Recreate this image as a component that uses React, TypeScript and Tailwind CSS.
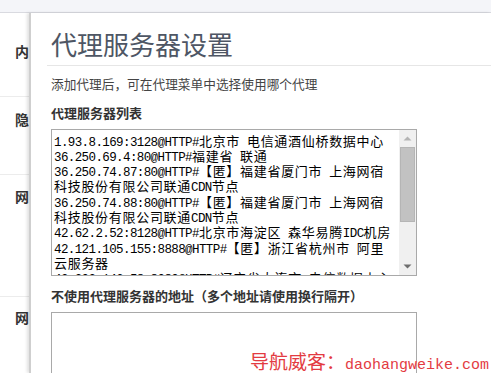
import React from 'react';

const proxyLines = [
  '1.93.8.169:3128@HTTP#北京市 电信通酒仙桥数据中心',
  '36.250.69.4:80@HTTP#福建省 联通',
  '36.250.74.87:80@HTTP#【匿】福建省厦门市 上海网宿',
  '科技股份有限公司联通CDN节点',
  '36.250.74.88:80@HTTP#【匿】福建省厦门市 上海网宿',
  '科技股份有限公司联通CDN节点',
  '42.62.2.52:8128@HTTP#北京市海淀区 森华易腾IDC机房',
  '42.121.105.155:8888@HTTP#【匿】浙江省杭州市 阿里',
  '云服务器',
  '42.202.146.58:8080@HTTP#辽宁省大连市 电信数据中心',
];

// split a line into CJK / ascii runs so the wide glyphs get their own sizing
const splitRuns = (text: string) => {
  const runs: { cjk: boolean; text: string }[] = [];
  const re = /[\u3000-\u9fff\uff00-\uffef]+/g;
  let last = 0;
  let m: RegExpExecArray | null;
  while ((m = re.exec(text)) !== null) {
    if (m.index > last) runs.push({ cjk: false, text: text.slice(last, m.index) });
    runs.push({ cjk: true, text: m[0] });
    last = m.index + m[0].length;
  }
  if (last < text.length) runs.push({ cjk: false, text: text.slice(last) });
  return runs;
};

const ProxyLine: React.FC<{ text: string }> = ({ text }) => (
  <div className="h-[15.3px] leading-[15.3px] whitespace-pre">
    {splitRuns(text).map((run, i) =>
      run.cjk ? (
        <span key={i} className="text-[13px] tracking-[0.7px] font-['Noto_Sans_CJK_SC',sans-serif]">
          {run.text}
        </span>
      ) : (
        <span key={i} className="text-[12.5px] tracking-[-0.6px] font-['Liberation_Mono',monospace]">
          {run.text}
        </span>
      )
    )}
  </div>
);

const SideRow: React.FC<{ label: string; className: string }> = ({ label, className }) => (
  <div className={`border-b border-[#ececec] pl-[15px] ${className}`}>
    <span className="text-[14px] font-bold text-[#333] leading-[20px] whitespace-nowrap">{label}</span>
  </div>
);

export default function App() {
  return (
    <div className="w-[491px] h-[373px] overflow-hidden bg-white relative font-['Noto_Sans_CJK_SC',sans-serif]">
      <div className="h-[13px] bg-[#f4f5f9] border-b border-[#d9dae0]" />

      <div className="flex h-[360px]">
        {/* page behind the dialog */}
        <div className="w-[29px] overflow-hidden shrink-0">
          <div className="w-[120px]">
            <SideRow label="内容设置" className="h-[84px] pt-[25px]" />
            <SideRow label="隐私设置" className="h-[78px] pt-[9px]" />
            <SideRow label="网络设置" className="h-[122px] pt-[8px]" />
            <div className="pl-[15px] pt-[7px]">
              <span className="text-[14px] font-bold text-[#333] leading-[20px] whitespace-nowrap">网页设置</span>
            </div>
          </div>
        </div>

        {/* dialog */}
        <div className="flex-1 border-l-2 border-[#cfcfcf] shadow-[-2px_0_3px_rgba(0,0,0,0.12)] bg-white">
          <div className="ml-[16px] pl-[4px] pt-[13px] pb-[3px] border-b border-[#e6e6e6]">
            <h1 className="text-[26px] leading-[36px] text-[#4e5664] font-normal">代理服务器设置</h1>
          </div>

          <div className="pl-[20px] pt-[8px]">
            <p className="text-[12.7px] leading-[20px] text-[#444]">添加代理后，可在代理菜单中选择使用哪个代理</p>
            <p className="mt-[9px] text-[13px] leading-[20px] font-bold text-[#333]">代理服务器列表</p>

            <div className="mt-[6px] w-[366px] h-[147px] border border-[#a9a9a9] flex">
              <div className="flex-1 overflow-hidden pl-[2px] pt-[1.5px] text-black">
                {proxyLines.map((line, i) => (
                  <ProxyLine key={i} text={line} />
                ))}
              </div>
              <div className="w-[17px] bg-[#f0f0f0] flex flex-col">
                <div className="h-[17px] flex items-center justify-center">
                  <svg width="9" height="5" viewBox="0 0 9 5">
                    <path d="M0.5 4.5 L4.5 0.5 L8.5 4.5 Z" fill="#b4b4b4" />
                  </svg>
                </div>
                <div className="flex-1 px-[1px]">
                  <div className="h-[75px] bg-[#c2c2c2] border border-[#b5b5b5]" />
                </div>
                <div className="h-[17px] flex items-center justify-center">
                  <svg width="9" height="5" viewBox="0 0 9 5">
                    <path d="M0.5 0.5 L4.5 4.5 L8.5 0.5 Z" fill="#6e6e6e" />
                  </svg>
                </div>
              </div>
            </div>

            <p className="mt-[10px] text-[13px] leading-[20px] font-bold text-[#333]">
              不使用代理服务器的地址（多个地址请使用换行隔开）
            </p>
            <div className="mt-[6px] w-[366px] h-[120px] border border-[#a9a9a9]" />
          </div>
        </div>
      </div>

      {/* watermark */}
      <div className="absolute left-[250px] top-[349px] leading-[24px] text-[#e33b42] whitespace-pre">
        <span className="text-[19px] font-['Noto_Sans_CJK_SC',sans-serif]">导航威客：</span>
        <span className="text-[15px] font-['Liberation_Mono',monospace]">daohangweike.com</span>
      </div>
    </div>
  );
}
